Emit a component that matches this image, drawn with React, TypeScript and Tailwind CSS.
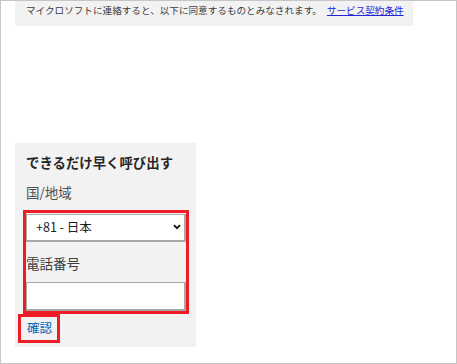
const jp = "font-['Noto_Sans_CJK_JP','Noto_Sans',sans-serif]";

const App = () => {
  return (
    <div className={`w-[457px] h-[364px] border border-[#c6c6c6] bg-white ${jp}`}>
      <div className="pl-[14px]">
        <div className="w-[398px] h-[25px] bg-[#f2f2f2] pl-[11px] pt-[1px] text-[9.6px] leading-[16px] text-[#3c3c3c]">
          マイクロソフトに連絡すると、以下に同意するものとみなされます。
          <a href="#" className="ml-[5px] text-[#2424d6] underline">
            サービス契約条件
          </a>
        </div>

        <div className="mt-[117px] w-[181px] h-[204px] bg-[#f2f2f2] pt-[10px]">
          <h2 className="pl-[11px] text-[13.4px] leading-[18px] font-bold text-[#262626]">
            できるだけ早く呼び出す
          </h2>
          <p className="mt-[12px] pl-[11px] text-[13.5px] leading-[18px] text-[#505050]">
            国/地域
          </p>

          <div className="mt-[9px] ml-[8px] w-[166px] border-[3px] border-[#ee1c25]">
            <div className="relative">
              <select className="w-full h-[28px] appearance-none bg-white border border-[#a8a8a8] border-b-2 border-r-2 pl-[9px] text-[12.5px] text-[#1e1e1e] outline-none">
                <option>+81 - 日本</option>
              </select>
              <svg
                className="absolute right-[5px] top-[11px] pointer-events-none"
                width="8"
                height="6"
                viewBox="0 0 8 6"
              >
                <path d="M1 1.2 L4 4.2 L7 1.2" stroke="#111" strokeWidth="1.8" fill="none" />
              </svg>
            </div>
            <p className="mt-[11px] mb-[9px] text-[13.5px] leading-[20px] text-[#3c3c3c]">
              電話番号
            </p>
            <input
              type="text"
              className="block w-full h-[29px] bg-white border border-[#a8a8a8] border-b-2 border-r-2 outline-none"
            />
          </div>

          <button className="ml-[3px] w-[42px] h-[29px] border-[3px] border-[#ee1c25] pl-[6px] text-left text-[12.5px] text-[#0067b8]">
            確認
          </button>
        </div>
      </div>
    </div>
  );
};

export default App;
